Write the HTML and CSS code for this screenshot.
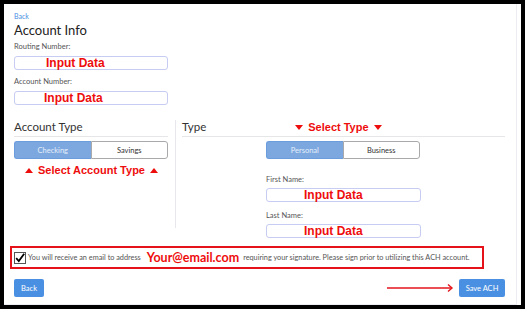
FILE: index.html
```html
<!DOCTYPE html>
<html lang="en">

<head>
  <meta charset="UTF-8">
  <meta name="viewport" content="width=device-width, initial-scale=1.0">
  <title>Account Info</title>
  <link rel="stylesheet" href="styles.css">
</head>

<body>
  <div class="frame">
    <div class="card">
      <a class="back-link" href="#">Back</a>
      <h1 class="title">Account Info</h1>

      <div class="field-label">Routing Number:</div>
      <div class="field routing">Input Data</div>
      <div class="field-label account-label">Account Number:</div>
      <div class="field account">Input Data</div>

      <div class="types">
        <div class="type-col left">
          <h2 class="section-head">Account Type</h2>
          <div class="toggle">
            <span class="opt active">Checking</span>
            <span class="opt">Savings</span>
          </div>
          <div class="note left-note"><span class="tri up"></span>Select Account Type<span class="tri up"></span></div>
        </div>
        <div class="divider"></div>
        <div class="type-col right">
          <h2 class="section-head">
            <span>Type</span>
            <span class="note type-note"><span class="tri down"></span>Select Type<span class="tri down"></span></span>
          </h2>
          <div class="right-body">
            <div class="toggle">
              <span class="opt active">Personal</span>
              <span class="opt">Business</span>
            </div>
            <div class="field-label first-label">First Name:</div>
            <div class="field name">Input Data</div>
            <div class="field-label last-label">Last Name:</div>
            <div class="field name">Input Data</div>
          </div>
        </div>
      </div>

      <div class="notice">
        <span class="check">
          <svg width="12" height="12" viewBox="0 0 12 12">
            <rect x="0.5" y="0.5" width="11" height="11" fill="#fff" stroke="#555" />
            <path d="M2.2 6.2 L4.8 9 L10.2 1.8" fill="none" stroke="#000" stroke-width="1.8" />
          </svg>
        </span>
        <span class="notice-txt">You will receive an email to address</span>
        <span class="email">Your@email.com</span>
        <span class="notice-txt">requiring your signature. Please sign prior to utilizing this ACH account.</span>
      </div>

      <div class="actions">
        <button type="button" class="btn">Back</button>
        <div class="spacer"></div>
        <svg class="arrow" width="67" height="10" viewBox="0 0 67 10">
          <path d="M0 5 H65" stroke="#e3141c" stroke-width="1.4" />
          <path d="M61 1.5 L65 5 L61 8.5" fill="none" stroke="#e3141c" stroke-width="1.4" />
        </svg>
        <button type="button" class="btn save">Save ACH</button>
      </div>
    </div>
  </div>
</body>

</html>
```

FILE: styles.css
```css
body {
  margin: 0;
  background: #fff;
  font-family: Lato, "Open Sans", sans-serif;
}

.frame {
  width: 517px;
  height: 301px;
  border: 4px solid #000;
}

.card {
  width: 491px;
  height: 293px;
  padding: 7px 11px 0 10px;
  border-right: 1px solid #ebedf2;
  border-bottom: 1px solid #ebedf2;
}

.back-link {
  display: block;
  font-size: 7px;
  line-height: 10px;
  color: #4a90e2;
  text-decoration: none;
}

.title {
  margin: 1px 0 0;
  font-size: 13px;
  line-height: 16px;
  font-weight: normal;
  color: #222;
}

.field-label {
  margin-top: 4px;
  font-size: 7.5px;
  line-height: 10px;
  color: #555;
}

.account-label {
  margin-top: 7px;
}

.field {
  box-sizing: border-box;
  width: 154px;
  height: 14px;
  margin-top: 4px;
  border: 1px solid #c6ccf2;
  border-radius: 3px;
  font-family: "Liberation Sans", Arial, sans-serif;
  font-weight: bold;
  font-size: 12px;
  line-height: 12px;
  color: #ee0d0d;
}

.routing {
  padding-left: 31px;
}

.account {
  padding-left: 29px;
}

.name {
  width: 155px;
  margin-top: 3px;
  padding-left: 37px;
}

.types {
  display: flex;
  margin-top: 15px;
}

.type-col.left {
  width: 154px;
}

.divider {
  width: 1px;
  height: 108px;
  margin: 0 6px 0 7px;
  background: #e8e8ec;
}

.type-col.right {
  flex: 1;
}

.section-head {
  display: flex;
  margin: 0;
  padding-bottom: 2px;
  border-bottom: 1px solid #e6e6e8;
  font-size: 11.5px;
  line-height: 14px;
  font-weight: normal;
  color: #333;
}

.toggle {
  display: flex;
  width: 154px;
  height: 18px;
  margin-top: 4px;
}

.opt {
  flex: 1;
  box-sizing: border-box;
  display: flex;
  align-items: center;
  justify-content: center;
  border: 1px solid #a9a9ab;
  background: #fff;
  font-size: 7.5px;
  color: #333;
}

.opt:first-child {
  border-radius: 3px 0 0 3px;
  border-right: none;
}

.opt:last-child {
  border-radius: 0 3px 3px 0;
}

.opt.active {
  background: #7da8df;
  border-color: #6b9ddd;
  color: #e4eefa;
}

.note {
  display: flex;
  align-items: center;
  font-family: "Liberation Sans", Arial, sans-serif;
  font-weight: bold;
  font-size: 11px;
  line-height: 14px;
  color: #ee0d0d;
}

.left-note {
  margin: 4px 0 0 11px;
}

.type-note {
  margin-left: 89px;
}

.tri {
  width: 0;
  height: 0;
  border-left: 4px solid transparent;
  border-right: 4px solid transparent;
}

.tri:first-child {
  margin-right: 5px;
}

.tri:last-child {
  margin-left: 5px;
}

.tri.up {
  border-bottom: 5px solid #ee0d0d;
}

.tri.down {
  border-top: 5px solid #ee0d0d;
}

.right-body {
  width: 155px;
  margin: 0 auto;
}

.first-label {
  margin-top: 16px;
}

.last-label {
  margin-top: 9px;
}

.notice {
  display: flex;
  align-items: center;
  box-sizing: border-box;
  width: 474px;
  height: 23px;
  margin: 8px 0 0 -4px;
  padding-left: 2px;
  border: 2px solid #e5121a;
}

.check {
  display: flex;
  margin-right: 2px;
}

.notice-txt {
  font-size: 7.3px;
  color: #555;
}

.email {
  margin: 0 4px 0 6px;
  font-weight: bold;
  font-size: 12.5px;
  color: #ee0d0d;
}

.actions {
  display: flex;
  align-items: center;
  margin-top: 10px;
}

.spacer {
  flex: 1;
}

.btn {
  height: 18px;
  width: 30px;
  padding: 0;
  border: none;
  border-radius: 2px;
  background: #4a90e2;
  font-family: Lato, sans-serif;
  font-size: 7.5px;
  color: #fff;
}

.btn.save {
  width: 46px;
}

.arrow {
  margin-right: 5px;
}
```
